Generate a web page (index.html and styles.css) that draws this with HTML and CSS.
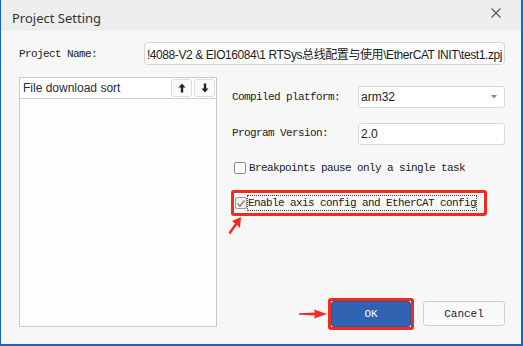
FILE: index.html
```html
<!DOCTYPE html>
<html lang="en">
<head>
    <meta charset="UTF-8">
    <title>Project Setting</title>
    <link rel="stylesheet" href="styles.css">
</head>
<body>
    <div class="dialog">
        <div class="titlebar">
            <span class="title">Project Setting</span>
            <svg class="close" width="10" height="10" viewBox="0 0 10 10">
                <path d="M0.5 0.5 L9.5 9.5 M9.5 0.5 L0.5 9.5" stroke="#555" stroke-width="1.1"/>
            </svg>
        </div>

        <div class="content">
            <div class="name-row">
                <span class="label">Project Name:</span>
                <div class="path-box">
                    <span class="path-text">!4088-V2 &amp; EIO16084\1 RTSys总线配置与使用\EtherCAT INIT\test1.zpj</span>
                </div>
            </div>

            <div class="main">
                <div class="list">
                    <div class="list-head">
                        <span class="list-title">File download sort</span>
                        <button class="arrow-btn">
                            <svg width="8" height="10" viewBox="0 0 8 10"><path d="M4 0.5 L7.5 4.5 H5.2 V9.5 H2.8 V4.5 H0.5 Z" fill="#222"/></svg>
                        </button>
                        <button class="arrow-btn">
                            <svg width="8" height="10" viewBox="0 0 8 10"><path d="M4 9.5 L7.5 5.5 H5.2 V0.5 H2.8 V5.5 H0.5 Z" fill="#222"/></svg>
                        </button>
                    </div>
                    <div class="list-body"></div>
                </div>

                <div class="options">
                    <div class="field">
                        <span class="label">Compiled platform:</span>
                        <div class="combo">
                            <span>arm32</span>
                            <svg width="6" height="4" viewBox="0 0 6 4"><path d="M0 0 H6 L3 3.5 Z" fill="#888"/></svg>
                        </div>
                    </div>
                    <div class="field">
                        <span class="label">Program Version:</span>
                        <div class="textbox">2.0</div>
                    </div>

                    <label class="check">
                        <span class="box"></span>
                        <span class="mono">Breakpoints pause only a single task</span>
                    </label>

                    <div class="highlight">
                        <label class="check checked">
                            <span class="box">
                                <svg width="10" height="9" viewBox="0 0 10 9"><path d="M1.5 4.5 L4 7 L8.5 1.5" stroke="#8a8a8a" stroke-width="1.6" fill="none"/></svg>
                            </span>
                            <span class="mono focus">Enable axis config and EtherCAT config</span>
                        </label>
                        <svg class="pointer-up" width="14" height="18" viewBox="0 0 14 18">
                            <path d="M13 0 L12 11 L9 8 L2 17.5 L0.5 15.5 L7 6.5 L4 4 Z" fill="#f42a1e"/>
                        </svg>
                    </div>

                    <div class="buttons">
                        <div class="ok-wrap">
                            <button class="btn ok">OK</button>
                            <svg class="pointer-right" width="28" height="10" viewBox="0 0 28 10">
                                <path d="M0 4.3 L16 3.6 L15 0.5 L28 5 L15 9.5 L16 6.4 L0 5.7 Z" fill="#f42a1e"/>
                            </svg>
                        </div>
                        <button class="btn cancel">Cancel</button>
                    </div>
                </div>
            </div>
        </div>
    </div>
</body>
</html>
```

FILE: styles.css
```css
body {
    margin: 0;
    background: #f7f7f7;
}

.dialog {
    width: 520px;
    height: 344px;
    border-left: 1px solid #1565c8;
    border-right: 2px solid #1565c8;
    border-bottom: 2px solid #1565c8;
    background: #f7f7f7;
    display: flex;
    flex-direction: column;
    font-family: "Liberation Mono", monospace;
    color: #222;
}

.titlebar {
    height: 31px;
    background: #eeeeee;
    display: flex;
    align-items: center;
    justify-content: space-between;
    padding: 0 20px 0 11px;
    flex-shrink: 0;
}

.title {
    font-family: "Noto Sans", sans-serif;
    font-size: 13px;
    color: #333;
    margin-top: 4px;
}

.close {
    margin-top: -6px;
}

.content {
    flex: 1;
    display: flex;
    flex-direction: column;
    padding: 11px 16px 14px 18px;
}

.label, .mono {
    font-family: "Liberation Mono", monospace;
    font-size: 11px;
    letter-spacing: -0.6px;
    color: #222;
    white-space: nowrap;
}

.name-row {
    display: flex;
    align-items: center;
    height: 23px;
}

.name-row .label {
    width: 126px;
}

.path-box {
    width: 358px;
    height: 21px;
    border: 1px solid #d6d6d6;
    border-radius: 4px;
    background: #fbfbfb;
    display: flex;
    justify-content: flex-end;
    align-items: center;
    overflow: hidden;
    padding-right: 2px;
}

.path-text {
    font-family: "Liberation Sans", "Noto Sans CJK SC", sans-serif;
    font-size: 12px;
    color: #1e1e1e;
    white-space: nowrap;
    letter-spacing: -0.42px;
}

.main {
    flex: 1;
    display: flex;
    margin-top: 12px;
}

.list {
    width: 196px;
    border: 1px solid #c8c8c8;
    display: flex;
    flex-direction: column;
    background: #fdfdfd;
    margin-bottom: 3px;
}

.list-head {
    height: 20px;
    border-bottom: 1px solid #cccccc;
    background: #ffffff;
    display: flex;
    align-items: center;
    padding: 0 1px 0 3px;
}

.list-title {
    flex: 1;
    font-family: "Liberation Sans", sans-serif;
    font-size: 12px;
    color: #2a2a3a;
}

.arrow-btn {
    width: 21px;
    height: 18px;
    margin-left: 2px;
    border: 1px solid #dcdcdc;
    border-radius: 3px;
    background: #fafafa;
    padding: 0;
    display: flex;
    align-items: center;
    justify-content: center;
}

.list-body {
    flex: 1;
}

.options {
    flex: 1;
    display: flex;
    flex-direction: column;
    padding-left: 14px;
}

.field {
    display: flex;
    align-items: center;
    height: 22px;
    margin-top: 9px;
}

.field + .field {
    margin-top: 14px;
}

.field .label {
    width: 126px;
    padding-left: 1px;
}

.combo, .textbox {
    width: 143px;
    height: 20px;
    border: 1px solid #d9d9d9;
    border-radius: 3px;
    background: #ffffff;
    font-family: "Liberation Sans", sans-serif;
    font-size: 12px;
    color: #1e1e1e;
    display: flex;
    align-items: center;
    padding-left: 2px;
    box-sizing: content-box;
}

.combo {
    justify-content: space-between;
    padding-right: 0;
}

.combo svg {
    margin-right: 7px;
}

.textbox {
    margin-top: 2px;
}

.check {
    display: flex;
    align-items: center;
    height: 16px;
    margin-top: 16px;
    padding-left: 3px;
}

.box {
    width: 10px;
    height: 10px;
    border: 1px solid #8a8a8a;
    border-radius: 2px;
    background: #ffffff;
    margin-right: 3px;
    display: flex;
    align-items: center;
    justify-content: center;
}

.checked .box {
    width: 10px;
    height: 10px;
    border-color: #9a9a9a;
    background: #f2f2f2;
    margin-right: 1px;
}

.highlight {
    position: relative;
    width: 250px;
    height: 20px;
    margin-top: 14px;
    border: 3px solid #f42a1e;
    border-radius: 3px;
    display: flex;
    align-items: center;
}

.highlight .check {
    margin-top: 0;
    padding-left: 1px;
}

.focus {
    outline: 1px dotted #444;
    outline-offset: 0;
    padding: 1px 0;
}

.pointer-up {
    position: absolute;
    left: -6px;
    top: 24px;
}

.buttons {
    margin-top: auto;
    display: flex;
    align-items: center;
    justify-content: flex-end;
    gap: 9px;
}

.ok-wrap {
    position: relative;
    border: 3px solid #f42a1e;
    border-radius: 3px;
    display: flex;
}

.pointer-right {
    position: absolute;
    left: -32px;
    top: 8px;
}

.btn {
    font-family: "Liberation Mono", monospace;
    font-size: 11px;
    border-radius: 3px;
    padding: 0;
}

.ok {
    width: 80px;
    height: 26px;
    background: #3063b1;
    border: 1px solid #2a56a0;
    color: #ffffff;
}

.cancel {
    width: 82px;
    height: 25px;
    background: #fafafa;
    border: 1px solid #cfcfcf;
    color: #222;
    margin-bottom: 1px;
}
```
